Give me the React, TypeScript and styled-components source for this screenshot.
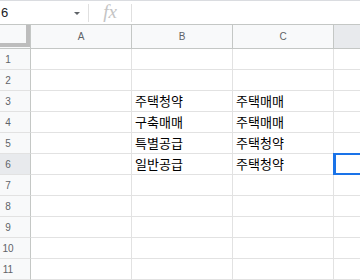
import React from 'react';
import styled, { createGlobalStyle, css } from 'styled-components';

const GlobalStyle = createGlobalStyle`
    html, body {
        margin: 0;
        padding: 0;
        background: #ffffff;
        overflow: hidden;
    }
    body {
        font-family: "Liberation Sans", Arial, sans-serif;
    }
`;

const StyledPage = styled.div`
    width: 360px;
    height: 280px;
    overflow: hidden;
    display: flex;
    flex-direction: column;
`;

const StyledFormulaBar = styled.div`
    display: flex;
    align-items: center;
    height: 23px;
    border-top: 1px solid #dadce0;
    border-bottom: 1px solid #c4c7c5;
    background: #ffffff;
    flex-shrink: 0;
`;

const StyledNameBox = styled.div`
    display: flex;
    align-items: center;
    justify-content: space-between;
    width: 88px;
    height: 100%;
    overflow: hidden;
    padding-left: 1px;
    padding-right: 8px;
    box-sizing: border-box;
`;

const StyledNameText = styled.span`
    font-size: 13px;
    color: #202124;
    white-space: nowrap;
`;

const StyledArrow = styled.span`
    width: 0;
    height: 0;
    border-left: 3px solid transparent;
    border-right: 3px solid transparent;
    border-top: 3px solid #5f6368;
    margin-top: 2px;
`;

const StyledDivider = styled.div`
    width: 1px;
    height: 18px;
    background: #e0e0e0;
`;

const StyledFx = styled.div`
    width: 42px;
    text-align: center;
    font-family: "Liberation Serif", "Times New Roman", serif;
    font-style: italic;
    font-size: 19px;
    color: #c4c4c4;
    line-height: 1;
    padding-bottom: 2px;
`;

const StyledGrid = styled.div`
    display: flex;
    flex-direction: column;
`;

const StyledRow = styled.div<{ $header?: boolean }>`
    display: flex;
    height: ${({ $header }) => ($header ? '24px' : '21px')};
    flex-shrink: 0;
`;

const StyledCorner = styled.div`
    position: relative;
    width: 30px;
    flex-shrink: 0;
    background: #f8f9fa;
    border-right: 1px solid #c4c7c5;
    border-bottom: 1px solid #c4c7c5;
    &::before {
        content: '';
        position: absolute;
        right: 0;
        top: 0;
        width: 4px;
        height: 22px;
        background: #bdbdbd;
    }
    &::after {
        content: '';
        position: absolute;
        left: 0;
        top: 18px;
        width: 30px;
        height: 4px;
        background: #bdbdbd;
    }
`;

const StyledColHeader = styled.div<{ $selected?: boolean; $fill?: boolean }>`
    width: 100px;
    flex-shrink: 0;
    display: flex;
    align-items: center;
    justify-content: center;
    font-size: 10px;
    color: #5f6368;
    background: ${({ $selected }) => ($selected ? '#e8eaed' : '#f8f9fa')};
    border-right: 1px solid #c4c7c5;
    border-bottom: 1px solid #c4c7c5;
    ${({ $fill }) =>
        $fill &&
        css`
            flex: 1;
            border-right: none;
        `}
`;

const StyledRowHeader = styled.div<{ $selected?: boolean }>`
    width: 16px;
    flex-shrink: 0;
    display: flex;
    align-items: center;
    justify-content: center;
    padding-right: 14px;
    font-size: 10px;
    color: #5f6368;
    background: ${({ $selected }) => ($selected ? '#e8eaed' : '#f8f9fa')};
    border-right: 1px solid #c4c7c5;
    border-bottom: 1px solid #e2e2e2;
`;

const StyledCell = styled.div<{ $fill?: boolean; $active?: boolean }>`
    position: relative;
    width: 101px;
    flex-shrink: 0;
    display: flex;
    align-items: flex-end;
    padding: 0 3px 3px;
    box-sizing: border-box;
    font-family: "Noto Sans CJK KR", "Liberation Sans", sans-serif;
    font-size: 13px;
    line-height: 14px;
    color: #000000;
    white-space: nowrap;
    border-right: 1px solid #e2e2e2;
    border-bottom: 1px solid #e2e2e2;
    ${({ $fill }) =>
        $fill &&
        css`
            flex: 1;
            border-right: none;
        `}
    ${({ $active }) =>
        $active &&
        css`
            &::after {
                content: '';
                position: absolute;
                left: -1px;
                top: -1px;
                right: -2px;
                bottom: -1px;
                border: 2px solid #1a73e8;
                border-left-width: 3px;
            }
        `}
`;

const columns = ['A', 'B', 'C'];

const data: Record<number, [string, string]> = {
    3: ['주택청약', '주택매매'],
    4: ['구축매매', '주택매매'],
    5: ['특별공급', '주택청약'],
    6: ['일반공급', '주택청약'],
};

const selectedRow = 6;

const App = (): JSX.Element => {
    const rows = Array.from({ length: 11 }, (_, i) => i + 1);

    return (
        <>
            <GlobalStyle />
            <StyledPage>
                <StyledFormulaBar>
                    <StyledNameBox>
                        <StyledNameText>6</StyledNameText>
                        <StyledArrow />
                    </StyledNameBox>
                    <StyledDivider />
                    <StyledFx>fx</StyledFx>
                    <StyledDivider />
                </StyledFormulaBar>
                <StyledGrid>
                    <StyledRow $header>
                        <StyledCorner />
                        {columns.map((col) => (
                            <StyledColHeader key={col}>{col}</StyledColHeader>
                        ))}
                        <StyledColHeader $selected $fill />
                    </StyledRow>
                    {rows.map((row) => {
                        const values = data[row];
                        return (
                            <StyledRow key={row}>
                                <StyledRowHeader $selected={row === selectedRow}>{row}</StyledRowHeader>
                                <StyledCell />
                                <StyledCell>{values ? values[0] : ''}</StyledCell>
                                <StyledCell>{values ? values[1] : ''}</StyledCell>
                                <StyledCell $fill $active={row === selectedRow} />
                            </StyledRow>
                        );
                    })}
                </StyledGrid>
            </StyledPage>
        </>
    );
};

export default App;
